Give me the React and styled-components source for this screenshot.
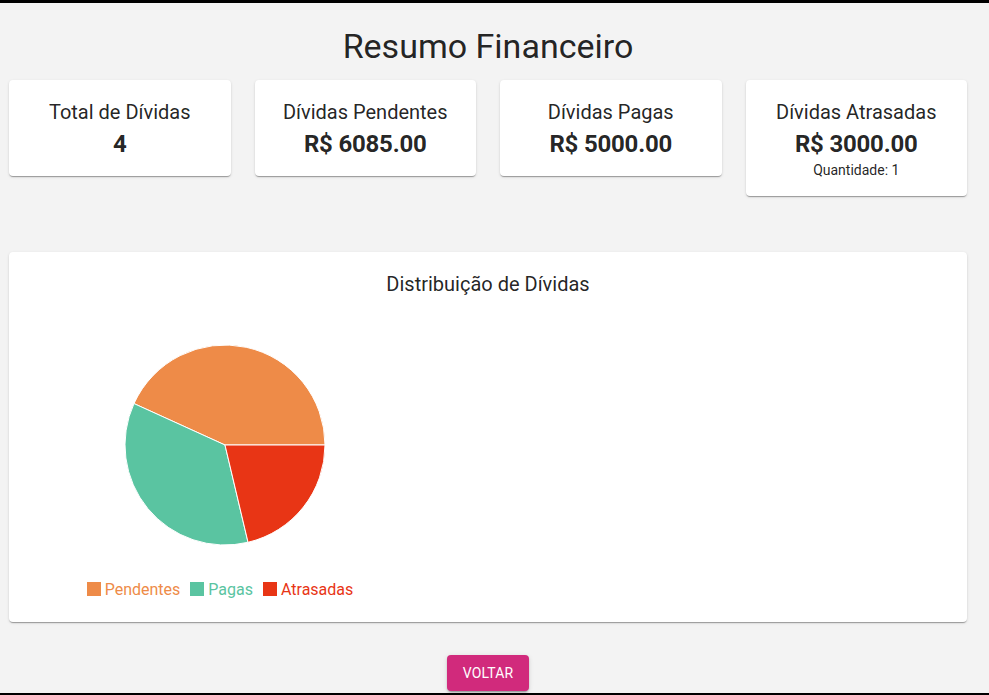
import styled, { createGlobalStyle } from "styled-components"

const GlobalStyle = createGlobalStyle`
    html, body {
        margin: 0;
        padding: 0;
        background-color: #f3f3f3;
        font-family: Roboto, "Liberation Sans", Arial, sans-serif;
        color: rgba(0, 0, 0, 0.87);
    }
`

const Pagina = styled.div`
    box-sizing: border-box;
    height: 695px;
    overflow: hidden;
    border-top: 3px solid #000;
    border-bottom: 2px solid #000;
`

const Conteudo = styled.div`
    width: 958px;
    margin-left: 9px;
    display: flex;
    flex-direction: column;
    align-items: center;
`

const Titulo = styled.h1`
    margin: 22px 0 13px;
    font-size: 34px;
    font-weight: 400;
    line-height: 42px;
`

const Grade = styled.div`
    width: 100%;
    display: grid;
    grid-template-columns: repeat(4, 1fr);
    gap: 24px;
    align-items: start;
`

const Papel = styled.div`
    background-color: #fff;
    border-radius: 4px;
    box-shadow: 0px 2px 1px -1px rgba(0,0,0,0.2), 0px 1px 1px 0px rgba(0,0,0,0.14), 0px 1px 3px 0px rgba(0,0,0,0.12);
    padding: 16px;
    box-sizing: border-box;
`

const Card = styled(Papel)`
    text-align: center;
`

const CardTitulo = styled.div`
    font-size: 20px;
    line-height: 32px;
`

const CardValor = styled.div`
    font-size: 24px;
    font-weight: 700;
    line-height: 32px;
    letter-spacing: -0.2px;
`

const CardExtra = styled.div`
    font-size: 14px;
    line-height: 20px;
`

const GraficoCard = styled(Papel)`
    width: 100%;
    margin-top: 56px;
    display: flex;
    flex-direction: column;
`

const GraficoTitulo = styled.div`
    font-size: 20px;
    line-height: 32px;
    text-align: center;
    margin-bottom: 8px;
`

const GraficoArea = styled.div`
    width: 400px;
    height: 298px;
    display: flex;
    flex-direction: column;
`

const Legenda = styled.ul`
    list-style: none;
    margin: 0;
    padding: 0 10px 0 0;
    display: flex;
    justify-content: center;
    height: 24px;
    align-items: center;
`

const LegendaItem = styled.li`
    display: flex;
    align-items: center;
    margin-right: 10px;
    font-size: 16px;
    color: ${({ cor }) => cor};

    &:last-child {
        margin-right: 0;
    }
`

const Quadrado = styled.span`
    width: 14px;
    height: 14px;
    margin-right: 4px;
    background-color: ${({ cor }) => cor};
`

const Botao = styled.button`
    margin-top: 33px;
    background-color: #d12a7c;
    color: #fff;
    border: none;
    border-radius: 4px;
    padding: 6px 16px;
    height: 36px;
    font-family: inherit;
    font-size: 14px;
    font-weight: 400;
    letter-spacing: 0.1px;
    text-transform: uppercase;
    box-shadow: 0px 3px 1px -2px rgba(0,0,0,0.2), 0px 2px 2px 0px rgba(0,0,0,0.14), 0px 1px 5px 0px rgba(0,0,0,0.12);
    cursor: pointer;
`

const dados = [
    { nome: "Pendentes", valor: 6085, cor: "#ee8b48" },
    { nome: "Pagas", valor: 5000, cor: "#5ac4a1" },
    { nome: "Atrasadas", valor: 3000, cor: "#e83515" },
]

function fatia(cx, cy, r, a0, a1) {
    const rad = (a) => (a * Math.PI) / 180
    const x0 = cx + r * Math.cos(rad(a0))
    const y0 = cy - r * Math.sin(rad(a0))
    const x1 = cx + r * Math.cos(rad(a1))
    const y1 = cy - r * Math.sin(rad(a1))
    const grande = a1 - a0 > 180 ? 1 : 0
    return `M${cx},${cy} L${x0},${y0} A${r},${r} 0 ${grande} 0 ${x1},${y1} Z`
}

function Pizza() {
    const total = dados.reduce((s, d) => s + d.valor, 0)
    let inicio = 0
    return (
        <svg width="400" height="269" viewBox="0 0 400 269">
            {dados.map((d) => {
                const fim = inicio + (d.valor / total) * 360
                const p = fatia(200, 137, 100, inicio, fim)
                inicio = fim
                return <path key={d.nome} d={p} fill={d.cor} stroke="#fff" strokeWidth="1" />
            })}
        </svg>
    )
}

export default function App() {
    return (
        <Pagina>
            <GlobalStyle />
            <Conteudo>
                <Titulo>Resumo Financeiro</Titulo>
                <Grade>
                    <Card>
                        <CardTitulo>Total de Dívidas</CardTitulo>
                        <CardValor>4</CardValor>
                    </Card>
                    <Card>
                        <CardTitulo>Dívidas Pendentes</CardTitulo>
                        <CardValor>R$ 6085.00</CardValor>
                    </Card>
                    <Card>
                        <CardTitulo>Dívidas Pagas</CardTitulo>
                        <CardValor>R$ 5000.00</CardValor>
                    </Card>
                    <Card>
                        <CardTitulo>Dívidas Atrasadas</CardTitulo>
                        <CardValor>R$ 3000.00</CardValor>
                        <CardExtra>Quantidade: 1</CardExtra>
                    </Card>
                </Grade>
                <GraficoCard>
                    <GraficoTitulo>Distribuição de Dívidas</GraficoTitulo>
                    <GraficoArea>
                        <Pizza />
                        <Legenda>
                            {dados.map((d) => (
                                <LegendaItem key={d.nome} cor={d.cor}>
                                    <Quadrado cor={d.cor} />
                                    {d.nome}
                                </LegendaItem>
                            ))}
                        </Legenda>
                    </GraficoArea>
                </GraficoCard>
                <Botao>Voltar</Botao>
            </Conteudo>
        </Pagina>
    )
}
